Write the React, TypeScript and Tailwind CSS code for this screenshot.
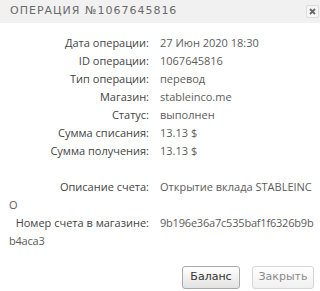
import React from "react";

const rows: [string, string][] = [
  ["Дата операции:", "27 Июн 2020 18:30"],
  ["ID операции:", "1067645816"],
  ["Тип операции:", "перевод"],
  ["Магазин:", "stableinco.me"],
  ["Статус:", "выполнен"],
  ["Сумма списания:", "13.13 $"],
  ["Сумма получения:", "13.13 $"],
];

function Row({ label, value, tight }: { label: string; value: string; tight?: boolean }) {
  return (
    <div>
      <span className="inline-block w-[140px] text-right mr-[11px] text-[#444]">{label}</span>
      <span className={tight ? "text-[#5c5c5c] break-all tracking-[-0.2px]" : "text-[#5c5c5c] break-all"}>{value}</span>
    </div>
  );
}

export default function App() {
  return (
    <div className="w-[320px] h-[291px] bg-white overflow-hidden" style={{ fontFamily: '"Open Sans", "DejaVu Sans", sans-serif' }}>
      <div className="h-[23px] bg-[#f1f1f1] flex items-center justify-between pl-[10px] pr-[1px]">
        <span className="text-[11px] tracking-[1px] text-[#6a6a6a] uppercase" style={{ fontFamily: '"DejaVu Sans", sans-serif' }}>Операция №1067645816</span>
        <div className="w-[13px] h-[13px] border border-[#dcdcdc] rounded-[2px] bg-[#f6f6f6] flex items-center justify-center">
          <svg width="7" height="7" viewBox="0 0 7 7">
            <path d="M1 1L6 6M6 1L1 6" stroke="#666" strokeWidth="1.8" />
          </svg>
        </div>
      </div>
      <div className="pt-[11px] pl-[9px] pr-[3px] text-[11px] leading-[18px]">
        {rows.map(([l, v]) => (
          <Row key={l} label={l} value={v} />
        ))}
        <div className="h-[18px]" />
        <Row label="Описание счета:" value="Открытие вклада STABLEINCO" />
        <Row label="Номер счета в магазине:" value="9b196e36a7c535baf1f6326b9bb4aca3" tight />
      </div>
      <div className="flex justify-end gap-[12px] pr-[6px] mt-[16px]">
        <button className="w-[58px] h-[23px] border border-[#a9a9a9] rounded-[3px] bg-gradient-to-b from-[#ffffff] to-[#e2e2e2] text-[11px] text-[#333]" style={{ fontFamily: '"DejaVu Sans", sans-serif' }}>
          Баланс
        </button>
        <button className="w-[62px] h-[23px] border border-[#d6d6d6] rounded-[3px] bg-gradient-to-b from-[#ffffff] to-[#f0f0f0] text-[11px] text-[#8a8a8a]" style={{ fontFamily: '"DejaVu Sans", sans-serif' }}>
          Закрыть
        </button>
      </div>
    </div>
  );
}
